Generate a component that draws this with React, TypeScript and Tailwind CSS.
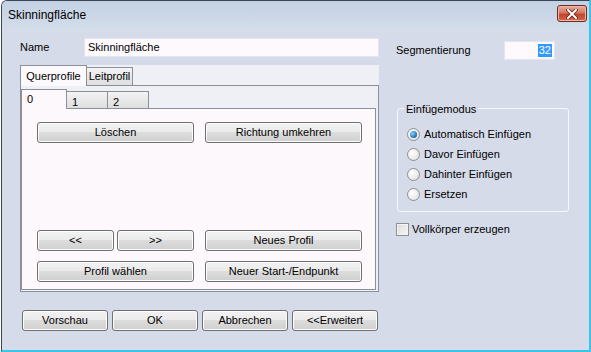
import React from 'react';

const font = { fontFamily: '"Liberation Sans", Arial, sans-serif' };

const Btn: React.FC<{ w: string; children: React.ReactNode }> = ({ w, children }) => (
    <div
        className={`${w} h-[21px] shrink-0 flex items-center justify-center rounded-[3px] border border-[#707070] bg-[linear-gradient(#f2f2f2_0%,#ebebeb_45%,#dddddd_50%,#cfcfcf_100%)] text-[11px] text-black shadow-[inset_0_0_0_1px_#fcfcfc]`}
    >
        {children}
    </div>
);

const Radio: React.FC<{ checked?: boolean; label: string }> = ({ checked, label }) => (
    <div className="flex items-center h-[20px]">
        <div className="w-[13px] h-[13px] rounded-full border border-[#8e8f8f] bg-[radial-gradient(circle_at_35%_35%,#ffffff,#dcdcdc)] flex items-center justify-center">
            {checked && (
                <div className="w-[7px] h-[7px] rounded-full bg-[radial-gradient(circle_at_35%_35%,#8ad1ff,#1c6fb7_70%,#0d4a8a)]" />
            )}
        </div>
        <span className="ml-[4px] text-[11px] text-black">{label}</span>
    </div>
);

export default function App() {
    return (
        <div className="w-[591px] h-[352px] bg-white overflow-hidden" style={font}>
            <div className="ml-[1px] w-[590px] h-[352px] flex flex-col border-t border-l border-[#3b4654] border-r-2 border-r-[#39c6ea] border-b-2 border-b-[#39c6ea] rounded-tl-[6px] overflow-hidden bg-[#d6dbe9]">
                {/* Title bar */}
                <div className="h-[29px] shrink-0 flex items-start justify-between bg-[linear-gradient(#c2d1e4,#d4ddea)]">
                    <span className="ml-[6px] mt-[5px] text-[12px] text-black">Skinningfläche</span>
                    <div className="mt-[4px] mr-[2px] w-[30px] h-[17px] rounded-[3px] border border-[#6b2a1f] bg-[linear-gradient(#e7a898_0%,#d67a64_45%,#c4442c_55%,#d2684c_100%)] flex items-center justify-center shadow-[inset_0_0_0_1px_#f0b9a9]">
                        <svg width="12" height="10" viewBox="0 0 12 10">
                            <path d="M2 1 L10 9 M10 1 L2 9" stroke="#5a2016" strokeWidth="3.6" strokeLinecap="square" />
                            <path d="M2 1 L10 9 M10 1 L2 9" stroke="#ffffff" strokeWidth="2" strokeLinecap="square" />
                        </svg>
                    </div>
                </div>

                {/* Client area */}
                <div className="flex-1 flex">
                    {/* Left column */}
                    <div className="ml-[18px] w-[359px] flex flex-col">
                        <div className="mt-[8px] h-[19px] flex items-center">
                            <span className="w-[64px] text-[11px] text-black">Name</span>
                            <div className="w-[295px] h-[19px] bg-[#fdf9fd] border border-[#e3e6ee] flex items-center pl-[3px] text-[11px] text-black">
                                Skinningfläche
                            </div>
                        </div>

                        {/* Outer tab control */}
                        <div className="mt-[8px] h-[227px] flex flex-col bg-[#eef0f6]">
                            <div className="h-[20px] flex items-end">
                                <div className="relative z-10 w-[67px] h-[21px] -mb-[1px] bg-[#fcf9fc] border border-b-0 border-[#8c909a] flex items-center justify-center text-[11px] text-black">
                                    Querprofile
                                </div>
                                <div className="w-[46px] h-[18px] bg-[linear-gradient(#f3f3f3,#dedede)] border border-l-0 border-b-0 border-[#8c909a] flex items-center justify-center text-[11px] text-black">
                                    Leitprofil
                                </div>
                            </div>
                            <div className="flex-1 border border-[#8c909a] pt-[3px] pr-[2px] pb-[1px] flex flex-col">
                                {/* Inner tab control */}
                                <div className="h-[19px] flex items-end">
                                    <div className="relative z-10 w-[46px] h-[20px] -mb-[1px] bg-[#fcf8fc] border border-b-0 border-[#8c909a] pl-[5px] pt-[1px] text-[11px] text-black">
                                        0
                                    </div>
                                    <div className="w-[41px] h-[17px] bg-[linear-gradient(#f3f3f3,#dedede)] border border-l-0 border-b-0 border-[#8c909a] pl-[5px] pt-[2px] text-[11px] text-black">
                                        1
                                    </div>
                                    <div className="w-[41px] h-[17px] bg-[linear-gradient(#f3f3f3,#dedede)] border border-l-0 border-b-0 border-[#8c909a] pl-[5px] pt-[2px] text-[11px] text-black">
                                        2
                                    </div>
                                </div>
                                <div className="flex-1 bg-[#fcf8fc] border border-[#8c909a] pl-[15px] pt-[13px] pb-[7px] flex flex-col">
                                    <div className="flex gap-[11px]">
                                        <Btn w="w-[157px]">Löschen</Btn>
                                        <Btn w="w-[157px]">Richtung umkehren</Btn>
                                    </div>
                                    <div className="flex-1" />
                                    <div className="flex gap-[11px]">
                                        <div className="flex gap-[3px]">
                                            <Btn w="w-[77px]">&lt;&lt;</Btn>
                                            <Btn w="w-[77px]">&gt;&gt;</Btn>
                                        </div>
                                        <Btn w="w-[157px]">Neues Profil</Btn>
                                    </div>
                                    <div className="mt-[10px] flex gap-[11px]">
                                        <Btn w="w-[157px]">Profil wählen</Btn>
                                        <Btn w="w-[157px]">Neuer Start-/Endpunkt</Btn>
                                    </div>
                                </div>
                            </div>
                        </div>

                        {/* Bottom buttons */}
                        <div className="mt-[18px] ml-[2px] flex gap-[4px]">
                            <Btn w="w-[86px]">Vorschau</Btn>
                            <Btn w="w-[86px]">OK</Btn>
                            <Btn w="w-[86px]">Abbrechen</Btn>
                            <Btn w="w-[86px]">&lt;&lt;Erweitert</Btn>
                        </div>
                    </div>

                    {/* Right column */}
                    <div className="ml-[17px] w-[173px] flex flex-col">
                        <div className="mt-[11px] h-[19px] flex items-center">
                            <span className="w-[108px] text-[11px] text-black">Segmentierung</span>
                            <div className="w-[51px] h-[19px] bg-[#fdf9fd] border border-[#e3e6ee] flex items-center justify-end pr-[2px]">
                                <span className="bg-[#3399ff] text-white text-[11px] leading-[13px] px-[1px]">32</span>
                            </div>
                        </div>

                        {/* Group box */}
                        <div className="relative mt-[48px] ml-[1px] w-[172px] h-[104px] border border-[#f6f8fb] rounded-[3px] pl-[9px] pt-[15px]">
                            <span className="absolute -top-[8px] left-[6px] px-[2px] bg-[#d6dbe9] text-[11px] text-black">
                                Einfügemodus
                            </span>
                            <Radio checked label="Automatisch Einfügen" />
                            <Radio label="Davor Einfügen" />
                            <Radio label="Dahinter Einfügen" />
                            <Radio label="Ersetzen" />
                        </div>

                        <div className="mt-[11px] flex items-center h-[13px]">
                            <div className="w-[13px] h-[13px] border border-[#8f8f8f] bg-[linear-gradient(135deg,#dcdcdc,#f6f6f6)] shadow-[inset_0_0_0_1px_#f4f4f4]" />
                            <span className="ml-[3px] text-[11px] text-black">Vollkörper erzeugen</span>
                        </div>
                    </div>
                </div>
            </div>
        </div>
    );
}
